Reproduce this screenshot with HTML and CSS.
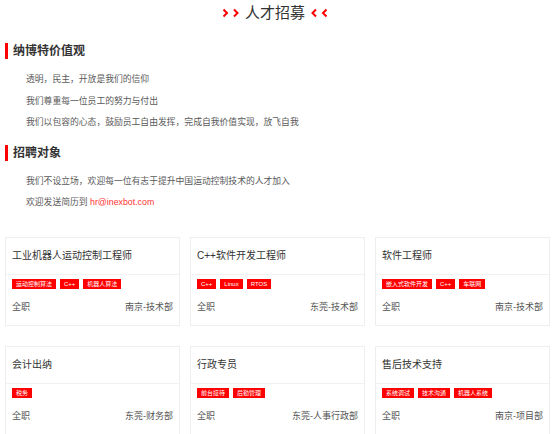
FILE: index.html
```html
<!DOCTYPE html>
<html lang="zh">
<head>
<meta charset="utf-8">
<link rel="stylesheet" href="styles.css">
</head>
<body>
<div class="page">
  <h1 class="title">
    <svg class="chev" width="17" height="10" viewBox="0 0 17 10"><path d="M1.5 1.5 L5 5 L1.5 8.5 M12 1.5 L15.5 5 L12 8.5" fill="none" stroke="#f00" stroke-width="2"/></svg>
    <span class="title-text">人才招募</span>
    <svg class="chev" width="17" height="10" viewBox="0 0 17 10"><path d="M5 1.5 L1.5 5 L5 8.5 M15.5 1.5 L12 5 L15.5 8.5" fill="none" stroke="#f00" stroke-width="2"/></svg>
  </h1>

  <h2 class="sec-head first">纳博特价值观</h2>
  <div class="para">
    <p>透明，民主，开放是我们的信仰</p>
    <p>我们尊重每一位员工的努力与付出</p>
    <p>我们以包容的心态，鼓励员工自由发挥，完成自我价值实现，放飞自我</p>
  </div>

  <h2 class="sec-head second">招聘对象</h2>
  <div class="para">
    <p>我们不设立场，欢迎每一位有志于提升中国运动控制技术的人才加入</p>
    <p>欢迎发送简历到 <span class="mail">hr@inexbot.com</span></p>
  </div>

  <div class="jobs">
    <div class="card">
      <div class="card-title">工业机器人运动控制工程师</div>
      <div class="tags"><span class="tag">运动控制算法</span><span class="tag">C++</span><span class="tag">机器人算法</span></div>
      <div class="card-foot"><span>全职</span><span>南京-技术部</span></div>
    </div>
    <div class="card">
      <div class="card-title">C++软件开发工程师</div>
      <div class="tags"><span class="tag">C++</span><span class="tag">Linux</span><span class="tag">RTOS</span></div>
      <div class="card-foot"><span>全职</span><span>东莞-技术部</span></div>
    </div>
    <div class="card">
      <div class="card-title">软件工程师</div>
      <div class="tags"><span class="tag">嵌入式软件开发</span><span class="tag">C++</span><span class="tag">车联网</span></div>
      <div class="card-foot"><span>全职</span><span>南京-技术部</span></div>
    </div>
    <div class="card">
      <div class="card-title">会计出纳</div>
      <div class="tags"><span class="tag">税务</span></div>
      <div class="card-foot"><span>全职</span><span>东莞-财务部</span></div>
    </div>
    <div class="card">
      <div class="card-title">行政专员</div>
      <div class="tags"><span class="tag">前台接待</span><span class="tag">后勤管理</span></div>
      <div class="card-foot"><span>全职</span><span>东莞-人事行政部</span></div>
    </div>
    <div class="card">
      <div class="card-title">售后技术支持</div>
      <div class="tags"><span class="tag">系统调试</span><span class="tag">技术沟通</span><span class="tag">机器人系统</span></div>
      <div class="card-foot"><span>全职</span><span>南京-项目部</span></div>
    </div>
  </div>
</div>
</body>
</html>
```

FILE: styles.css
```css
html { overflow: hidden; }
body {
  margin: 0;
  background: #fff;
  font-family: "Liberation Sans", "Noto Sans CJK SC", sans-serif;
  color: #333;
}
.page {
  padding: 0 4px 0 5px;
}
.title {
  margin: 0;
  height: 25px;
  display: flex;
  align-items: center;
  justify-content: center;
  gap: 6px;
  font-size: 15px;
  font-weight: normal;
  color: #333;
  padding-right: 5px;
}
.chev { display: block; }
.title-text { line-height: 25px; }

.sec-head {
  margin: 0;
  height: 18px;
  line-height: 18px;
  font-size: 12px;
  font-weight: bold;
  color: #333;
  display: flex;
  align-items: center;
  gap: 5px;
}
.sec-head::before {
  content: "";
  width: 3px;
  height: 16px;
  background: #f00;
  display: block;
}
.sec-head.first { margin-top: 17px; }
.sec-head.second { margin-top: 10px; }

.para {
  margin-top: 9px;
  padding-left: 21px;
  font-size: 8.8px;
  line-height: 21.5px;
  color: #5a5a5a;
}
.para p { margin: 0; }
.mail { color: #f33; }

.jobs {
  margin-top: 23px;
  display: grid;
  grid-template-columns: repeat(3, 1fr);
  column-gap: 10px;
  row-gap: 20px;
}
.card {
  border: 1px solid #eee;
  background: #fff;
}
.card-title {
  height: 36px;
  line-height: 36px;
  padding: 0 6px;
  font-size: 10px;
  color: #333;
  border-bottom: 1px solid #f2f2f2;
}
.tags {
  display: flex;
  gap: 4px;
  padding: 4px 6px 0;
}
.tag {
  background: #f00;
  color: #fff;
  font-size: 6px;
  height: 10px;
  line-height: 10px;
  padding: 0 4px;
}
.card-foot {
  height: 36px;
  display: flex;
  align-items: center;
  justify-content: space-between;
  padding: 0 6px;
  font-size: 9px;
  color: #555;
}
```
